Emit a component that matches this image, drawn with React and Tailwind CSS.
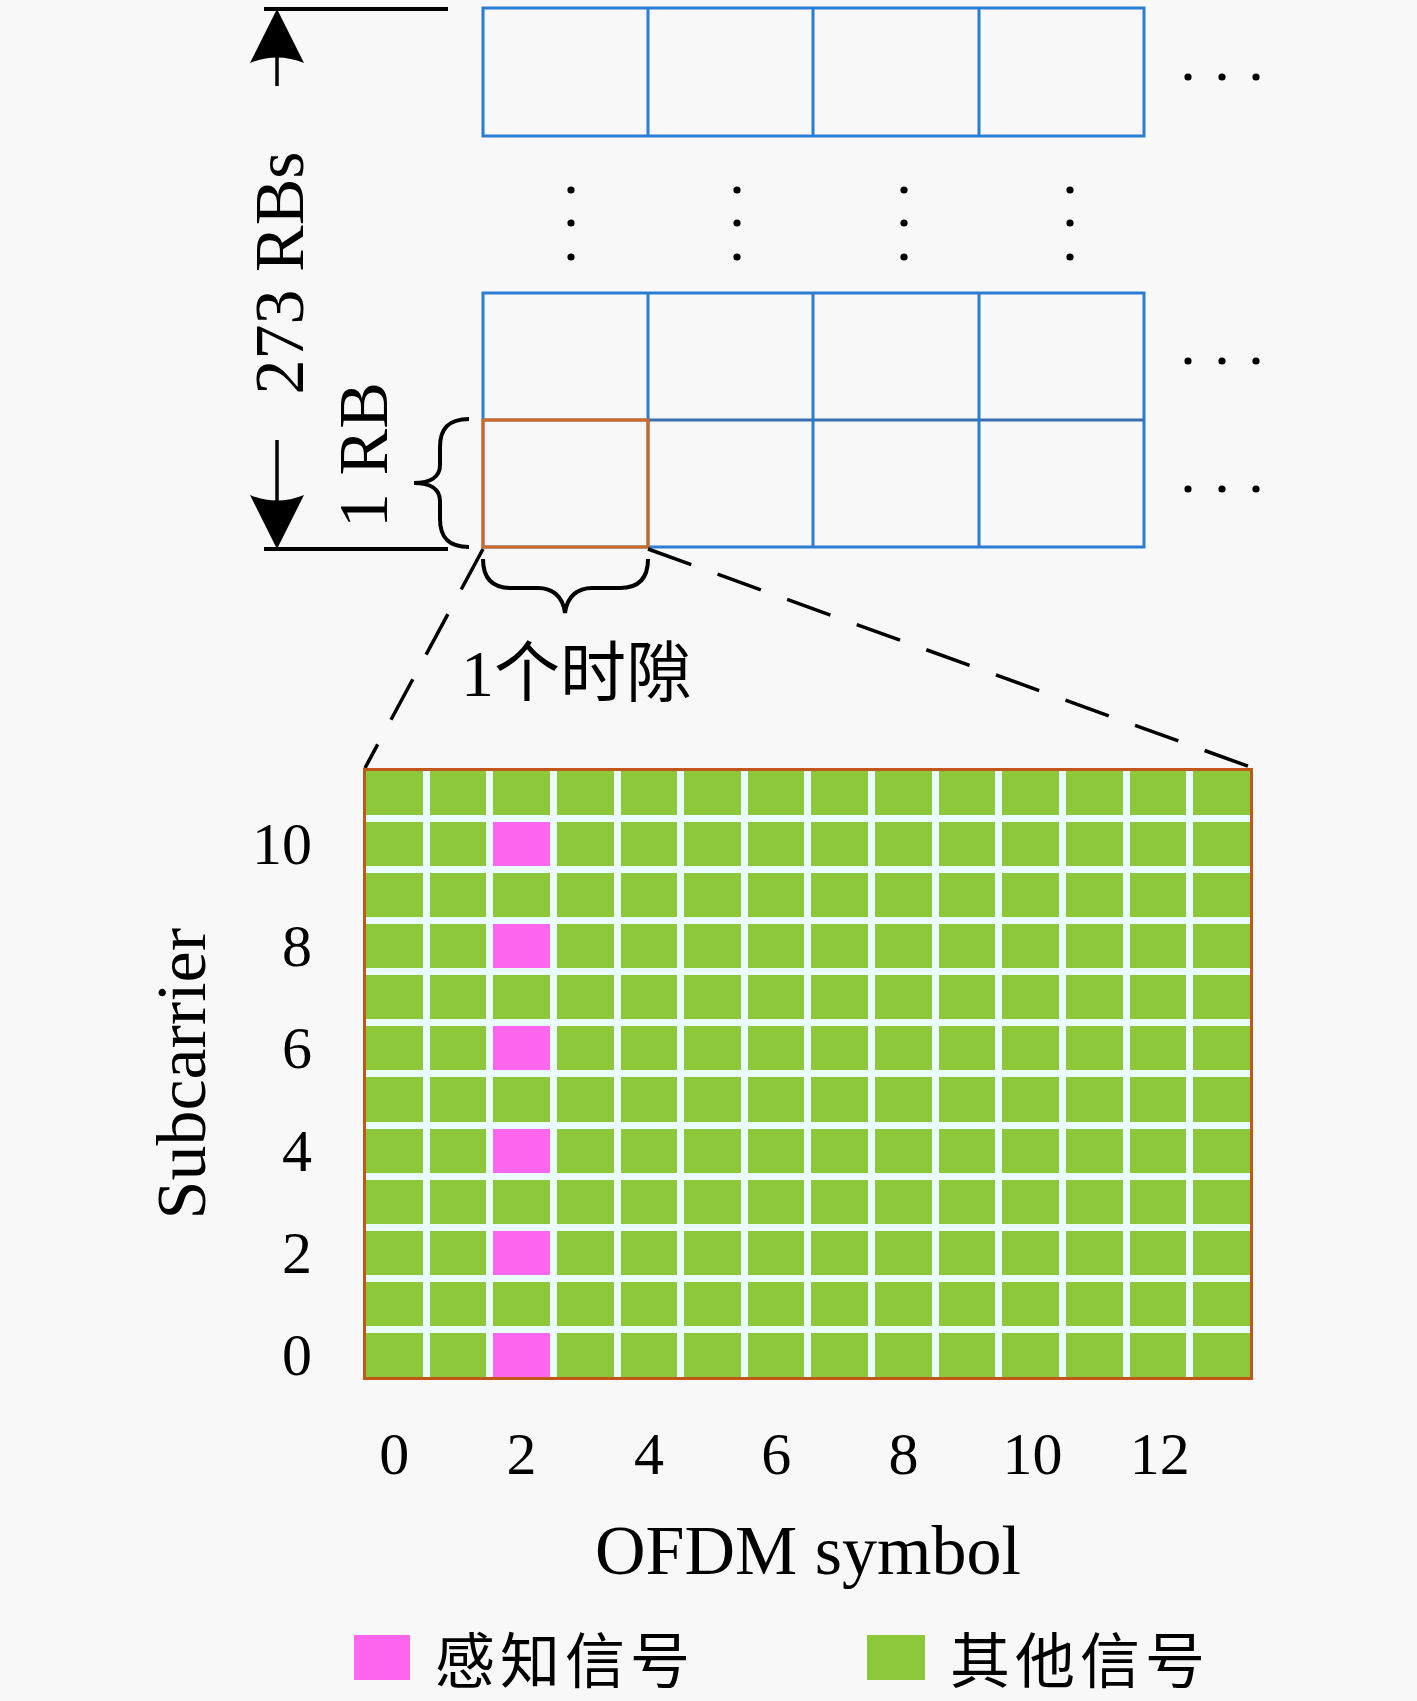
import React from "react";

const serif = "'Liberation Serif', 'Noto Sans CJK SC', serif";

function TopDiagram() {
  const vx = [648, 813, 979];
  const dotX = [571, 737, 904, 1070];
  const dotY = [190, 223, 257];
  const ellX = [1188, 1222, 1256];
  const ellY = [77, 361, 489];
  return (
    <svg width="1417" height="768" viewBox="0 0 1417 768" className="block">
      {/* dimension lines and arrows */}
      <line x1="264" y1="9" x2="448" y2="9" stroke="#000" strokeWidth="4" />
      <line x1="264" y1="549" x2="448" y2="549" stroke="#000" strokeWidth="4" />
      <line x1="277" y1="50" x2="277" y2="86" stroke="#000" strokeWidth="3.5" />
      <path d="M277 9 L304 63 Q277 52 250 63 Z" fill="#000" />
      <line x1="277" y1="440" x2="277" y2="510" stroke="#000" strokeWidth="3.5" />
      <path d="M277 549 L304 495 Q277 506 250 495 Z" fill="#000" />

      <text
        transform="translate(303 273) rotate(-90)"
        textAnchor="middle"
        fontSize="70"
        fontFamily={serif}
        fill="#000"
      >
        273 RBs
      </text>
      <text
        transform="translate(387 455) rotate(-90)"
        textAnchor="middle"
        fontSize="70"
        fontFamily={serif}
        fill="#000"
      >
        1 RB
      </text>

      {/* left brace */}
      <path
        d="M469 419 C448 419 440 429 440 447 L440 465 C440 477 430 483 414 483 C430 483 440 489 440 501 L440 519 C440 537 448 547 469 547"
        fill="none"
        stroke="#000"
        strokeWidth="4"
      />

      {/* RB grid */}
      <g stroke="#2b7cd3" strokeWidth="3" fill="none">
        <rect x="483" y="8" width="661" height="128" />
        {vx.map((x) => (
          <line key={"t" + x} x1={x} y1="8" x2={x} y2="136" />
        ))}
        <rect x="483" y="293" width="661" height="254" />
        <line x1="483" y1="420" x2="1144" y2="420" stroke="#3a6fae" />
        {vx.map((x) => (
          <line key={"m" + x} x1={x} y1="293" x2={x} y2="547" />
        ))}
      </g>
      <rect x="483" y="420" width="165" height="127" fill="none" stroke="#d2691e" strokeWidth="3" />

      {/* vertical dots */}
      {dotX.map((x) =>
        dotY.map((y) => <circle key={x + "-" + y} cx={x} cy={y} r="3.6" fill="#000" />)
      )}
      {/* horizontal ellipses */}
      {ellY.map((y) =>
        ellX.map((x) => <circle key={"e" + x + "-" + y} cx={x} cy={y} r="3.6" fill="#000" />)
      )}

      {/* bottom brace */}
      <path
        d="M483 559 C483 579 493 588 511 588 L538 588 C552 588 563 596 565 613 C567 596 578 588 592 588 L620 588 C638 588 648 579 648 559"
        fill="none"
        stroke="#000"
        strokeWidth="4"
      />
      <text x="461" y="696" fontSize="66" fontFamily={serif} fill="#000">
        1个时隙
      </text>

      {/* dashed zoom lines */}
      <line x1="483" y1="549" x2="365" y2="768" stroke="#000" strokeWidth="3.5" strokeDasharray="46 28" />
      <line x1="648" y1="549" x2="1253" y2="768" stroke="#000" strokeWidth="3.5" strokeDasharray="46 28" />
    </svg>
  );
}

function Heatmap() {
  const cells = [];
  for (let r = 0; r < 12; r++) {
    const sub = 11 - r;
    for (let c = 0; c < 14; c++) {
      const pink = c === 2 && sub % 2 === 0;
      cells.push(
        <div key={r + "-" + c} className={pink ? "bg-[#ff66ee]" : "bg-[#8cc83a]"} />
      );
    }
  }
  return (
    <div className="w-[890px] h-[612px] border-[3px] border-[#c0581a] bg-[#eafcff] grid grid-cols-[repeat(14,minmax(0,1fr))] grid-rows-[repeat(12,minmax(0,1fr))] gap-[7px]">
      {cells}
    </div>
  );
}

export default function App() {
  const yTicks = Array.from({ length: 12 }, (_, r) => 11 - r);
  const xTicks = Array.from({ length: 14 }, (_, c) => c);
  return (
    <div className="w-[1417px] h-[1701px] overflow-hidden bg-[#f8f8f8] text-black font-['Liberation_Serif','Noto_Sans_CJK_SC',serif]">
      <TopDiagram />

      {/* heatmap row */}
      <div className="flex items-stretch">
        <div className="flex items-center h-[612px] pl-[147px]">
          <div className="w-[70px] text-[70px] leading-none [writing-mode:vertical-rl] rotate-180 whitespace-nowrap">
            Subcarrier
          </div>
          <div className="w-[95px] mr-[51px] h-[612px] py-[3px] grid grid-rows-[repeat(12,minmax(0,1fr))] gap-[7px]">
            {yTicks.map((s) => (
              <div key={s} className="flex items-center justify-end">
                <div className="text-[60px] leading-none">{s % 2 === 0 ? s : ""}</div>
              </div>
            ))}
          </div>
        </div>
        <Heatmap />
      </div>

      {/* x ticks */}
      <div className="ml-[363px] w-[890px] px-[3px] mt-[44px] grid grid-cols-[repeat(14,minmax(0,1fr))] gap-[7px]">
        {xTicks.map((c) => (
          <div key={c} className="h-[60px] text-center text-[60px] leading-none whitespace-nowrap">
            {c % 2 === 0 ? c : ""}
          </div>
        ))}
      </div>

      {/* x axis label */}
      <div className="ml-[363px] w-[890px] mt-[32px] text-center text-[70px] leading-none">
        OFDM symbol
      </div>

      {/* legend */}
      <div className="flex items-center pl-[354px] mt-[41px] h-[60px]">
        <div className="w-[56px] h-[45px] bg-[#ff66ee]" />
        <div className="ml-[25px] h-[60px] text-[60px] leading-none tracking-[5px] font-['Noto_Sans_CJK_SC',sans-serif]">感知信号</div>
        <div className="ml-[172px] w-[58px] h-[45px] bg-[#8cc83a]" />
        <div className="ml-[25px] h-[60px] text-[60px] leading-none tracking-[5px] font-['Noto_Sans_CJK_SC',sans-serif]">其他信号</div>
      </div>
    </div>
  );
}
